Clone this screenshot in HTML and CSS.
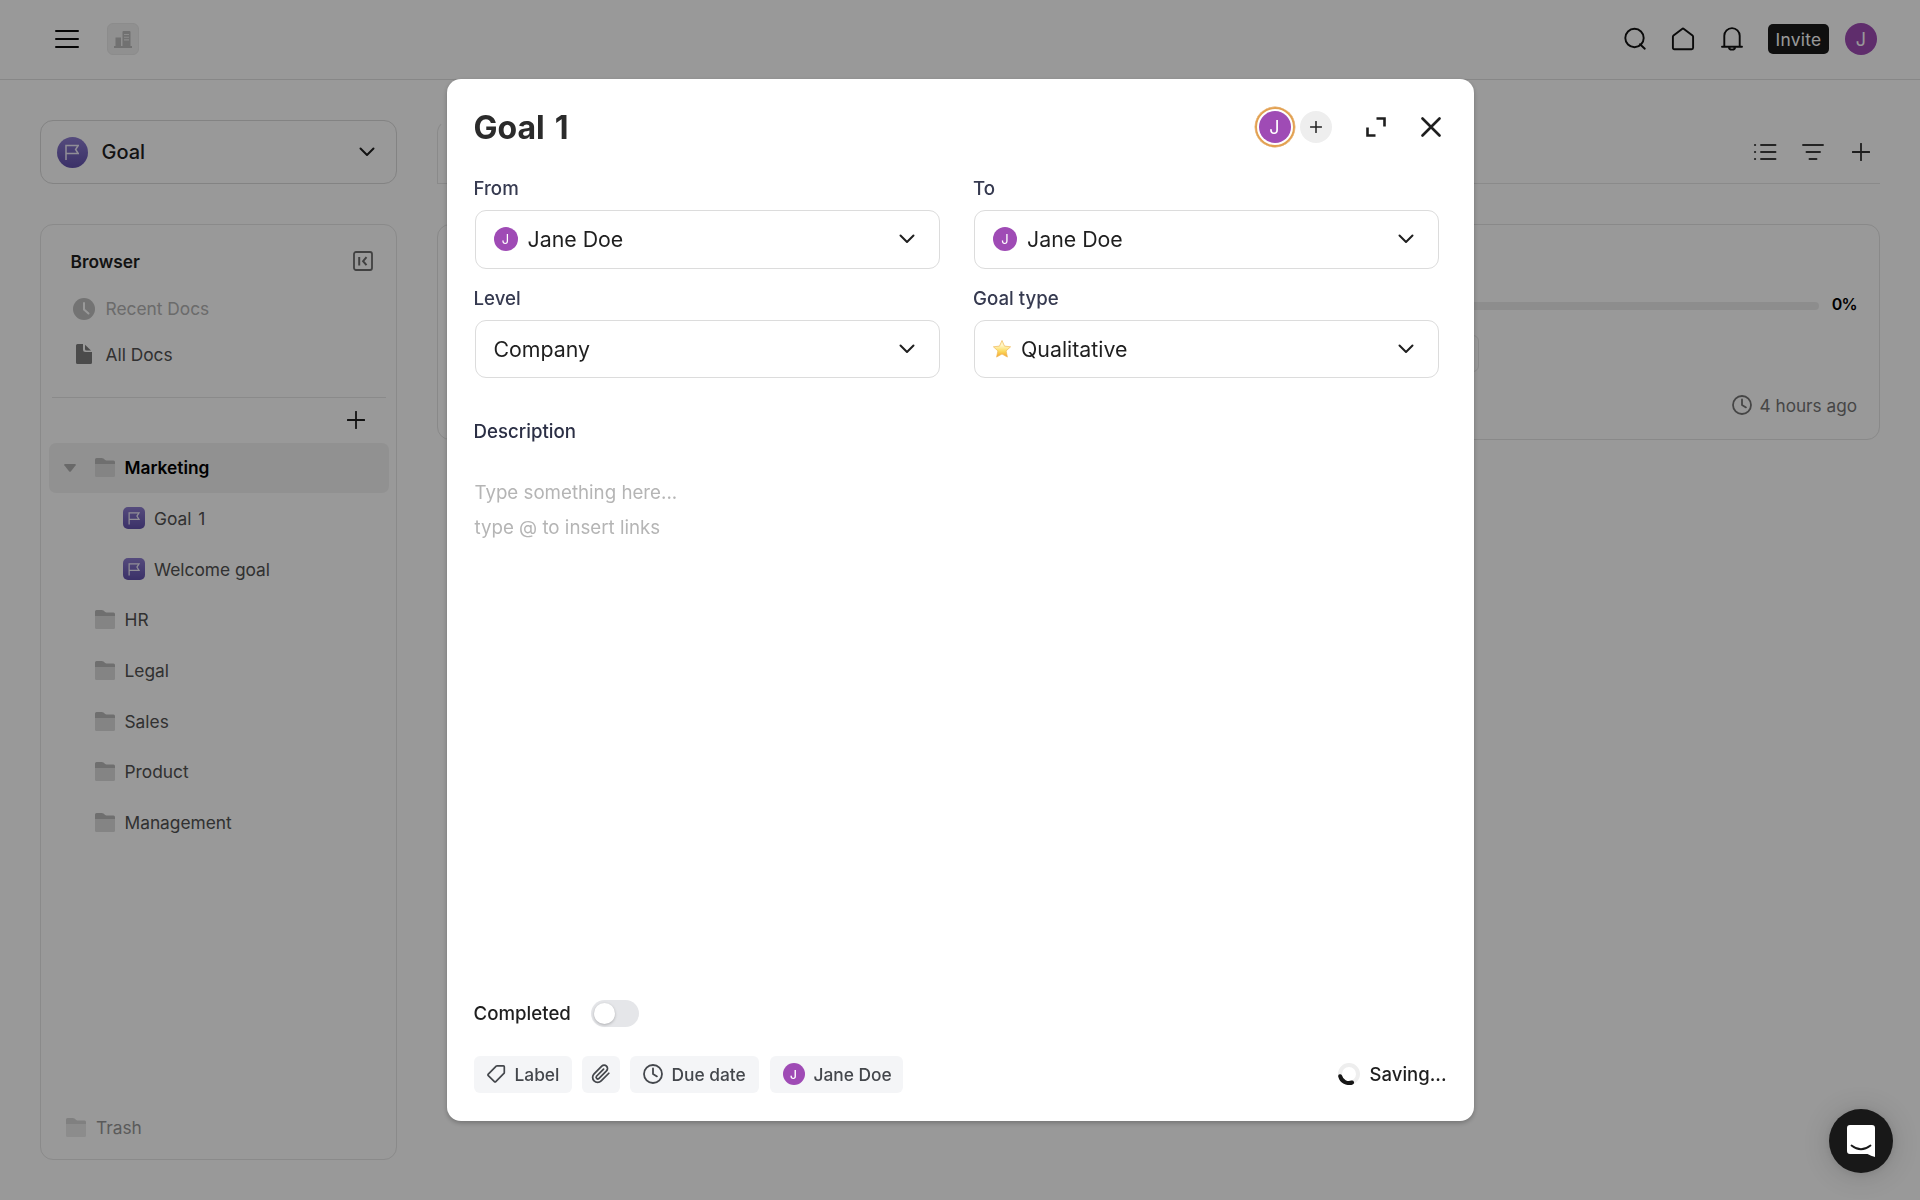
FILE: index.html
```html
<!DOCTYPE html>
<html lang="en">
<head>
<meta charset="utf-8">
<title>Goal 1</title>
<link rel="stylesheet" href="styles.css">
</head>
<body>
<svg class="defs" width="0" height="0">
  <defs>
    <linearGradient id="starFill" x1="0" y1="0" x2="0" y2="1"><stop offset="0.3" stop-color="#fff6c4"/><stop offset="0.65" stop-color="#fbd95c"/><stop offset="1" stop-color="#f3a12c"/></linearGradient>
    <symbol id="flag" viewBox="0 0 14 16"><path d="M1 15.500V1h12.200l-2.600 4 2.600 4H1" fill="none" stroke="#f1edfb" stroke-width="1.500"/></symbol>
    <symbol id="folder" viewBox="0 0 20 19"><path d="M0 8V1.500Q0 0 1.500 0h5.200q1 0 1.800.6l1.700 1.400q.5.400 1.200.4H18.500Q20 2.400 20 4v4z" fill="#bababa"/><path d="M0 6h20v11.500q0 1.500-1.500 1.500h-17Q0 19 0 17.500z" fill="#dcdcdc"/></symbol>
    <symbol id="chevron" viewBox="0 0 16 10"><path d="M1.500 1.500 8 8l6.500-6.500" fill="none" stroke="#1f1f1f" stroke-width="2" stroke-linecap="round" stroke-linejoin="round"/></symbol>
    <symbol id="plus" viewBox="0 0 18 18"><path d="M9 .7v16.600M.7 9h16.600" fill="none" stroke="currentColor" stroke-width="1.800" stroke-linecap="round"/></symbol>
    <symbol id="clock" viewBox="0 0 20 20"><circle cx="10" cy="10" r="9" fill="none" stroke="currentColor" stroke-width="1.800"/><path d="M10 4.500V10l4 2.400" fill="none" stroke="currentColor" stroke-width="1.800" stroke-linecap="round" stroke-linejoin="round"/></symbol>
  </defs>
</svg>

<div class="app">
  <header class="topbar">
    <svg class="menu" width="25" height="20" viewBox="0 0 25 20"><path d="M2 2h22M2 10h22M2 18h22" stroke="#0a0a0a" stroke-width="2" stroke-linecap="round"/></svg>
    <div class="workspace">
      <svg width="18" height="17" viewBox="0 0 18 17"><path d="M0 15h18v2H0zM1.500 6.500h5.500V15H1.500zM8.500 1q0-1 1-1h6q1 0 1 1v14h-8z" fill="#bcbcbc"/><path d="M10 3.500h5M10 6.200h5M10 8.900h5" stroke="#e9e9e9" stroke-width="1.100"/></svg>
    </div>
    <nav class="top-actions">
      <svg width="24" height="24" viewBox="0 0 24 24"><g fill="none" stroke="#111" stroke-width="1.900" stroke-linecap="round"><circle cx="11.500" cy="11" r="9.200"/><path d="m17 17.200 4.800 4.500"/></g></svg>
      <svg width="24" height="24" viewBox="0 0 24 24"><path d="M1.900 9.700q0-.8.600-1.300l8.600-6.500q.9-.7 1.800 0l8.600 6.500q.6.500.6 1.300v11q0 1.500-1.500 1.500H3.400q-1.500 0-1.500-1.500z" fill="none" stroke="#111" stroke-width="1.900"/></svg>
      <svg width="24" height="24" viewBox="0 0 24 24"><path d="M2 19.700h20M4.300 19.700V8.800a7.700 7.700 0 0 1 15.400 0v10.900" fill="none" stroke="#111" stroke-width="1.900" stroke-linecap="round"/><path d="M8 20.200h8a4 3.400 0 0 1-8 0z" fill="#111"/><path d="M10.600 21.200h2.800" stroke="#fff" stroke-width=".9"/></svg>
      <span class="invite">Invite</span>
      <span class="avatar avatar-lg">J</span>
    </nav>
  </header>

  <div class="page">
    <aside class="side">
      <div class="doc-type">
        <span class="type-badge"><svg width="14" height="17"><use href="#flag"/></svg></span>
        <span class="type-name">Goal</span>
        <svg width="16" height="10"><use href="#chevron"/></svg>
      </div>
      <div class="browser">
        <div class="browser-head">
          <span>Browser</span>
          <svg width="20" height="20" viewBox="0 0 20 20" fill="none" stroke="#6d6d6d"><rect x="1" y="1" width="18" height="18" rx="2" stroke-width="1.800"/><path d="M6.200 6v8.500" stroke-width="2"/><path d="m13.500 6.200-3.400 4 3.400 4" stroke-width="2"/></svg>
        </div>
        <div class="quick recent">
          <span class="quick-icon"><svg width="22" height="22" viewBox="0 0 22 22"><circle cx="11" cy="11" r="11" fill="#c0c0c0"/><path d="M11 5v6.500l4.500 4" fill="none" stroke="#fff" stroke-width="2" stroke-linecap="round"/></svg></span>
          <span>Recent Docs</span>
        </div>
        <div class="quick">
          <span class="quick-icon"><svg width="16" height="20" viewBox="0 0 16 20"><path d="M1.500 0H7v5.500Q7 8 9.500 8H16v10.500q0 1.500-1.500 1.500h-13Q0 20 0 18.500v-17Q0 0 1.500 0z" fill="#7d7d7d"/><path d="M9 .8 15 6.500h-4.500Q9 6.500 9 5z" fill="#7d7d7d"/></svg></span>
          <span>All Docs</span>
        </div>
        <hr>
        <div class="add-row"><svg width="18" height="18"><use href="#plus"/></svg></div>
        <ul class="tree">
          <li class="node active"><svg class="caret" width="12" height="8" viewBox="0 0 12 8"><path d="M1 0h10q1.200.2.700 1.200L7 7.300q-1 1-2 0L.3 1.200Q-.2.200 1 0z" fill="#b0b0b0"/></svg><svg class="folder" width="20" height="19"><use href="#folder"/></svg><span>Marketing</span></li>
          <li class="node child"><span class="doc-icon"><svg width="12" height="13"><use href="#flag"/></svg></span><span class="numbered">Goal 1</span></li>
          <li class="node child"><span class="doc-icon"><svg width="12" height="13"><use href="#flag"/></svg></span><span>Welcome goal</span></li>
          <li class="node"><svg class="folder" width="20" height="19"><use href="#folder"/></svg><span>HR</span></li>
          <li class="node"><svg class="folder" width="20" height="19"><use href="#folder"/></svg><span>Legal</span></li>
          <li class="node"><svg class="folder" width="20" height="19"><use href="#folder"/></svg><span>Sales</span></li>
          <li class="node"><svg class="folder" width="20" height="19"><use href="#folder"/></svg><span>Product</span></li>
          <li class="node"><svg class="folder" width="20" height="19"><use href="#folder"/></svg><span>Management</span></li>
        </ul>
        <div class="trash"><svg class="folder" width="20" height="19"><use href="#folder"/></svg><span>Trash</span></div>
      </div>
    </aside>

    <main class="main">
      <div class="toolbar">
        <svg width="24" height="18" viewBox="0 0 24 18"><path d="M8 2h14.500M8 9h14.500M8 16h14.500" stroke="#3c3c3c" stroke-width="1.900" stroke-linecap="round"/><path d="M2 2h.1M2 9h.1M2 16h.1" stroke="#3c3c3c" stroke-width="2.200" stroke-linecap="round"/></svg>
        <svg width="24" height="18" viewBox="0 0 24 18"><path d="M2 2h20M5.500 9h13.500M8.500 16h7" stroke="#3c3c3c" stroke-width="1.900" stroke-linecap="round"/></svg>
        <svg class="new-doc" width="18" height="18"><use href="#plus"/></svg>
      </div>
      <section class="goal-card">
        <div class="progress"><div class="bar"></div><span class="percent">0%</span></div>
        <div class="key-result"></div>
        <div class="updated"><svg width="20" height="20"><use href="#clock"/></svg><span>4 hours ago</span></div>
      </section>
    </main>
  </div>
</div>

<div class="overlay">
  <div class="modal">
    <div class="modal-head">
      <h1>Goal 1</h1>
      <span class="ring"><span class="avatar avatar-lg">J</span></span>
      <span class="add-person"><svg width="12" height="12" viewBox="0 0 12 12"><path d="M6 .5v11M.5 6h11" stroke="#222" stroke-width="1.500" stroke-linecap="round"/></svg></span>
      <svg class="expand" width="20" height="20" viewBox="0 0 20 20"><path d="M10.500 1.500h8v8M1.500 10.500v8h8" fill="none" stroke="#1f1f1f" stroke-width="2.600"/></svg>
      <svg class="close" width="20" height="20" viewBox="0 0 20 20"><path d="m1.500 1.500 17 17M18.500 1.500l-17 17" stroke="#1f1f1f" stroke-width="2.600" stroke-linecap="round"/></svg>
    </div>
    <div class="fields">
      <div class="field"><label>From</label><div class="select"><span class="avatar avatar-md">J</span><span class="value">Jane Doe</span><svg width="16" height="10"><use href="#chevron"/></svg></div></div>
      <div class="field"><label>To</label><div class="select"><span class="avatar avatar-md">J</span><span class="value">Jane Doe</span><svg width="16" height="10"><use href="#chevron"/></svg></div></div>
      <div class="field"><label>Level</label><div class="select"><span class="value">Company</span><svg width="16" height="10"><use href="#chevron"/></svg></div></div>
      <div class="field"><label>Goal type</label><div class="select"><svg class="star" width="18" height="18" viewBox="0 0 18 18"><path d="m9 .5 2.500 5.600 6.100.7-4.500 4.100 1.300 6.200L9 14l-5.400 3.100 1.300-6.200L.4 6.800l6.100-.7z" fill="url(#starFill)" stroke="#f0b757" stroke-width=".7" stroke-linejoin="round"/></svg><span class="value">Qualitative</span><svg width="16" height="10"><use href="#chevron"/></svg></div></div>
    </div>
    <div class="description">Description</div>
    <div class="editor"><p>Type something here...</p><p>type @ to insert links</p></div>
    <div class="completed"><span>Completed</span><span class="toggle"><span class="knob"></span></span></div>
    <div class="modal-foot">
      <span class="chip chip-label"><svg width="20" height="20" viewBox="0 0 20 20"><path d="M11.200 1.800h6.200q.9 0 .9.900v5.700q0 .6-.4 1L9.800 17.600q-.7.700-1.400 0l-6.100-6q-.7-.7 0-1.400l7.900-8q.4-.4 1-.4z" fill="none" stroke="#44474c" stroke-width="1.700" stroke-linejoin="round"/></svg>Label</span>
      <span class="chip chip-attach"><svg width="20" height="20" viewBox="0 0 24 24"><path d="m21.400 11.100-9.200 9.200a6 6 0 0 1-8.500-8.500l9.200-9.200a4 4 0 0 1 5.700 5.700l-9.200 9.200a2 2 0 0 1-2.800-2.800l8.500-8.500" fill="none" stroke="#44474c" stroke-width="2.100" stroke-linecap="round"/></svg></span>
      <span class="chip chip-date"><svg width="20" height="20"><use href="#clock"/></svg>Due date</span>
      <span class="chip chip-owner"><span class="avatar avatar-sm">J</span>Jane Doe</span>
      <span class="saving"><svg width="22" height="22" viewBox="0 0 22 22" fill="none" stroke-width="4"><circle cx="11" cy="11" r="9" stroke="#eee"/><path d="M2.200 13.200A9 9 0 0 0 14 19.500" stroke="#161616" stroke-linecap="round"/></svg>Saving...</span>
    </div>
  </div>
</div>

<div class="chat"><svg width="28" height="32" viewBox="0 0 28 32"><path d="M3 0h22q3 0 3 3v29q-4-.8-7.500-3H3q-3 0-3-3V3q0-3 3-3z" fill="#fff"/><path d="M4.500 20.500q9.500 7.500 19 0" fill="none" stroke="#181818" stroke-width="1.800" stroke-linecap="round"/></svg></div>
</body>
</html>
```

FILE: styles.css
```css
* { box-sizing: border-box; }
body { margin: 0; background: #fff; font-family: Inter, "Liberation Sans", sans-serif; color: #1f1f1f; overflow: hidden; }
svg { display: block; flex: none; }
.defs { position: absolute; }
.app { height: 1200px; display: flex; flex-direction: column; }

.topbar { height: 80px; flex: none; display: flex; align-items: center; padding: 0 43px 1px 54px; border-bottom: 1px solid #e2e2e2; }
.workspace { width: 32px; height: 32px; margin-left: 28px; display: flex; align-items: center; justify-content: center; background: #f0f0f0; border: 1px solid #e9e9e9; border-radius: 6px; }
.top-actions { margin-left: auto; display: flex; align-items: center; gap: 24.500px; }
.invite { width: 61px; height: 30px; margin: 0 -8.500px 0 0; display: flex; align-items: center; justify-content: center; background: #191919; color: #fff; border-radius: 5px; font-size: 17.330px; letter-spacing: .3px; }

.avatar { display: flex; align-items: center; justify-content: center; flex: none; border-radius: 50%; background: #9f4bb5; color: #fff; }
.avatar-lg { width: 32px; height: 32px; font-size: 18px; }
.avatar-md { width: 24px; height: 24px; font-size: 13px; }
.avatar-sm { width: 22px; height: 22px; font-size: 12px; }

.page { flex: 1; min-height: 0; display: grid; grid-template-columns: 357px 1fr; gap: 40px; padding: 40px; }
.side { display: flex; flex-direction: column; gap: 40px; min-height: 0; }
.doc-type { height: 64px; flex: none; display: flex; align-items: center; padding: 0 21px 0 15.500px; border: 1px solid #dadada; border-radius: 13px; }
.type-badge { width: 31px; height: 31px; display: flex; align-items: center; justify-content: center; border-radius: 50%; background: linear-gradient(#8d7dd0, #6251ad); }
.type-name { flex: 1; margin-left: 14px; font-size: 20px; font-weight: 500; }

.browser { flex: 1; min-height: 0; display: flex; flex-direction: column; padding: 11px 7px 20px 8px; border: 1px solid #e6e6e6; border-radius: 13px; }
.browser-head { height: 50px; flex: none; display: flex; align-items: center; justify-content: space-between; padding: 0 16px 0 21.500px; font-size: 17.330px; font-weight: 600; }
.quick { height: 45.500px; flex: none; display: flex; align-items: center; padding-left: 24px; font-size: 17.330px; color: #525252; }
.quick-icon { width: 22px; margin-right: 10.500px; display: flex; justify-content: center; }
.recent { color: #b2b2b2; }
hr { width: 334px; height: 1px; margin: 20px 0 0 3px; border: 0; background: #e6e6e6; }
.add-row { height: 44.500px; flex: none; display: flex; align-items: center; justify-content: flex-end; padding-right: 24px; }
.tree { list-style: none; margin: 0; padding: 0; }
.node { height: 50.670px; display: flex; align-items: center; padding-left: 45.500px; font-size: 17.330px; color: #525252; }
.node .folder { margin-right: 10px; }
.node.active { padding-left: 15px; border-radius: 7px; background: #f2f2f2; color: #000; font-weight: 600; }
.numbered { word-spacing: 2px; }
.caret { margin-right: 18.500px; }
.node.child { padding-left: 74px; }
.doc-icon { width: 22px; height: 22px; margin-right: 9px; display: flex; align-items: center; justify-content: center; border-radius: 5px; background: linear-gradient(#8d7dd0, #6251ad); }
.trash { margin-top: auto; height: 24px; display: flex; align-items: center; gap: 10px; padding-left: 17px; font-size: 17.330px; color: #525252; opacity: .6; }

.main { display: flex; flex-direction: column; min-width: 0; }
.toolbar { height: 64px; flex: none; display: flex; align-items: center; justify-content: flex-end; gap: 24px; padding: 0 10px 1px 0; border: 1px solid #e6e6e6; border-right: 0; border-radius: 13px 0 0 0; border-top-color: transparent; color: #333; }
.new-doc { margin-left: 3px; }
.goal-card { height: 216px; margin-top: 40px; display: flex; flex-direction: column; padding: 67px 22px 0; border: 1px solid #e4e4e4; border-radius: 13px; }
.progress { display: flex; align-items: center; gap: 13px; height: 24px; }
.bar { flex: 1; height: 8px; margin-top: 3px; border-radius: 4px; background: #ececec; }
.percent { font-size: 16px; font-weight: 600; letter-spacing: -.7px; color: #000; }
.key-result { width: 1019px; height: 37px; margin-top: 19px; border: 1px solid #e6e6e6; border-radius: 6px; }
.updated { display: flex; align-items: center; justify-content: flex-end; gap: 8px; margin-top: 21px; height: 24px; font-size: 17.200px; color: #757575; }

.overlay { position: fixed; inset: 0; display: flex; align-items: center; justify-content: center; background: rgba(0, 0, 0, .4); }
.modal { width: 1027px; height: 1042px; display: flex; flex-direction: column; padding: 0 27px 28.500px; background: #fff; border-radius: 14px; box-shadow: 0 2px 5px rgba(0, 0, 0, .25); }
.modal-head { height: 95px; flex: none; display: flex; align-items: center; padding: 1px 6px 0 0; }
h1 { flex: 1; margin: 0; font-size: 32px; font-weight: 700; word-spacing: 2.500px; color: #2b2b2b; }
.ring { padding: 2px; border: 2px solid #e2a152; border-radius: 50%; box-shadow: 0 0 0 .4px #e2a152; }
.add-person { width: 32px; height: 32px; margin-left: 5px; display: flex; align-items: center; justify-content: center; border-radius: 50%; background: #eee; }
.expand { margin-left: 34px; }
.close { margin-left: 35px; }

.fields { display: grid; grid-template-columns: 465px 465px; column-gap: 34.500px; row-gap: 15px; padding-left: 1px; }
.field label { display: block; height: 36px; margin-left: -1px; line-height: 29px; font-size: 18.670px; font-weight: 500; color: #363a50; }
.select { height: 58.500px; display: flex; align-items: center; padding: 0 24px 0 18px; border: 1px solid #dcdcdc; border-radius: 11px; font-size: 21.330px; }
.value { flex: 1; }
.select .avatar + .value { margin-left: 10px; }
.star + .value { margin-left: 10px; }
.description { margin-top: 38.500px; line-height: 29px; font-size: 18.670px; font-weight: 500; color: #2b2f45; }
.editor { flex: 1; margin-top: 29.500px; padding-left: 1px; font-size: 18.720px; color: #b5b5b5; }
.editor p { margin: 0; line-height: 35px; }

.completed { display: flex; align-items: center; gap: 20px; margin-bottom: 28.500px; font-size: 18.670px; font-weight: 500; }
.toggle { width: 48px; height: 27px; padding: 3px; border-radius: 14px; background: #e5e6e9; }
.knob { display: block; width: 21px; height: 21px; border-radius: 50%; background: #fff; box-shadow: 0 1px 3px rgba(0, 0, 0, .25); }
.modal-foot { display: flex; align-items: center; gap: 10.500px; }
.chip { height: 37px; display: flex; align-items: center; border-radius: 6px; background: #f4f5f7; font-size: 17.330px; font-weight: 500; color: #44474c; }
.chip-label { width: 98px; padding-left: 12.500px; gap: 8.500px; }
.chip-attach { width: 37.500px; justify-content: center; }
.chip-date { width: 129px; padding-left: 12.500px; gap: 9px; }
.chip-owner { width: 133.500px; padding-left: 13px; gap: 9px; }
.saving { margin-left: auto; display: flex; align-items: center; gap: 9.500px; font-size: 18.500px; font-weight: 500; color: #1f1f1f; }

.chat { position: fixed; right: 27px; bottom: 27px; width: 64px; height: 64px; display: flex; align-items: center; justify-content: center; border-radius: 50%; background: #181818; box-shadow: 0 2px 28px rgba(0, 0, 0, .16), 0 1px 8px rgba(0, 0, 0, .08); }
```
